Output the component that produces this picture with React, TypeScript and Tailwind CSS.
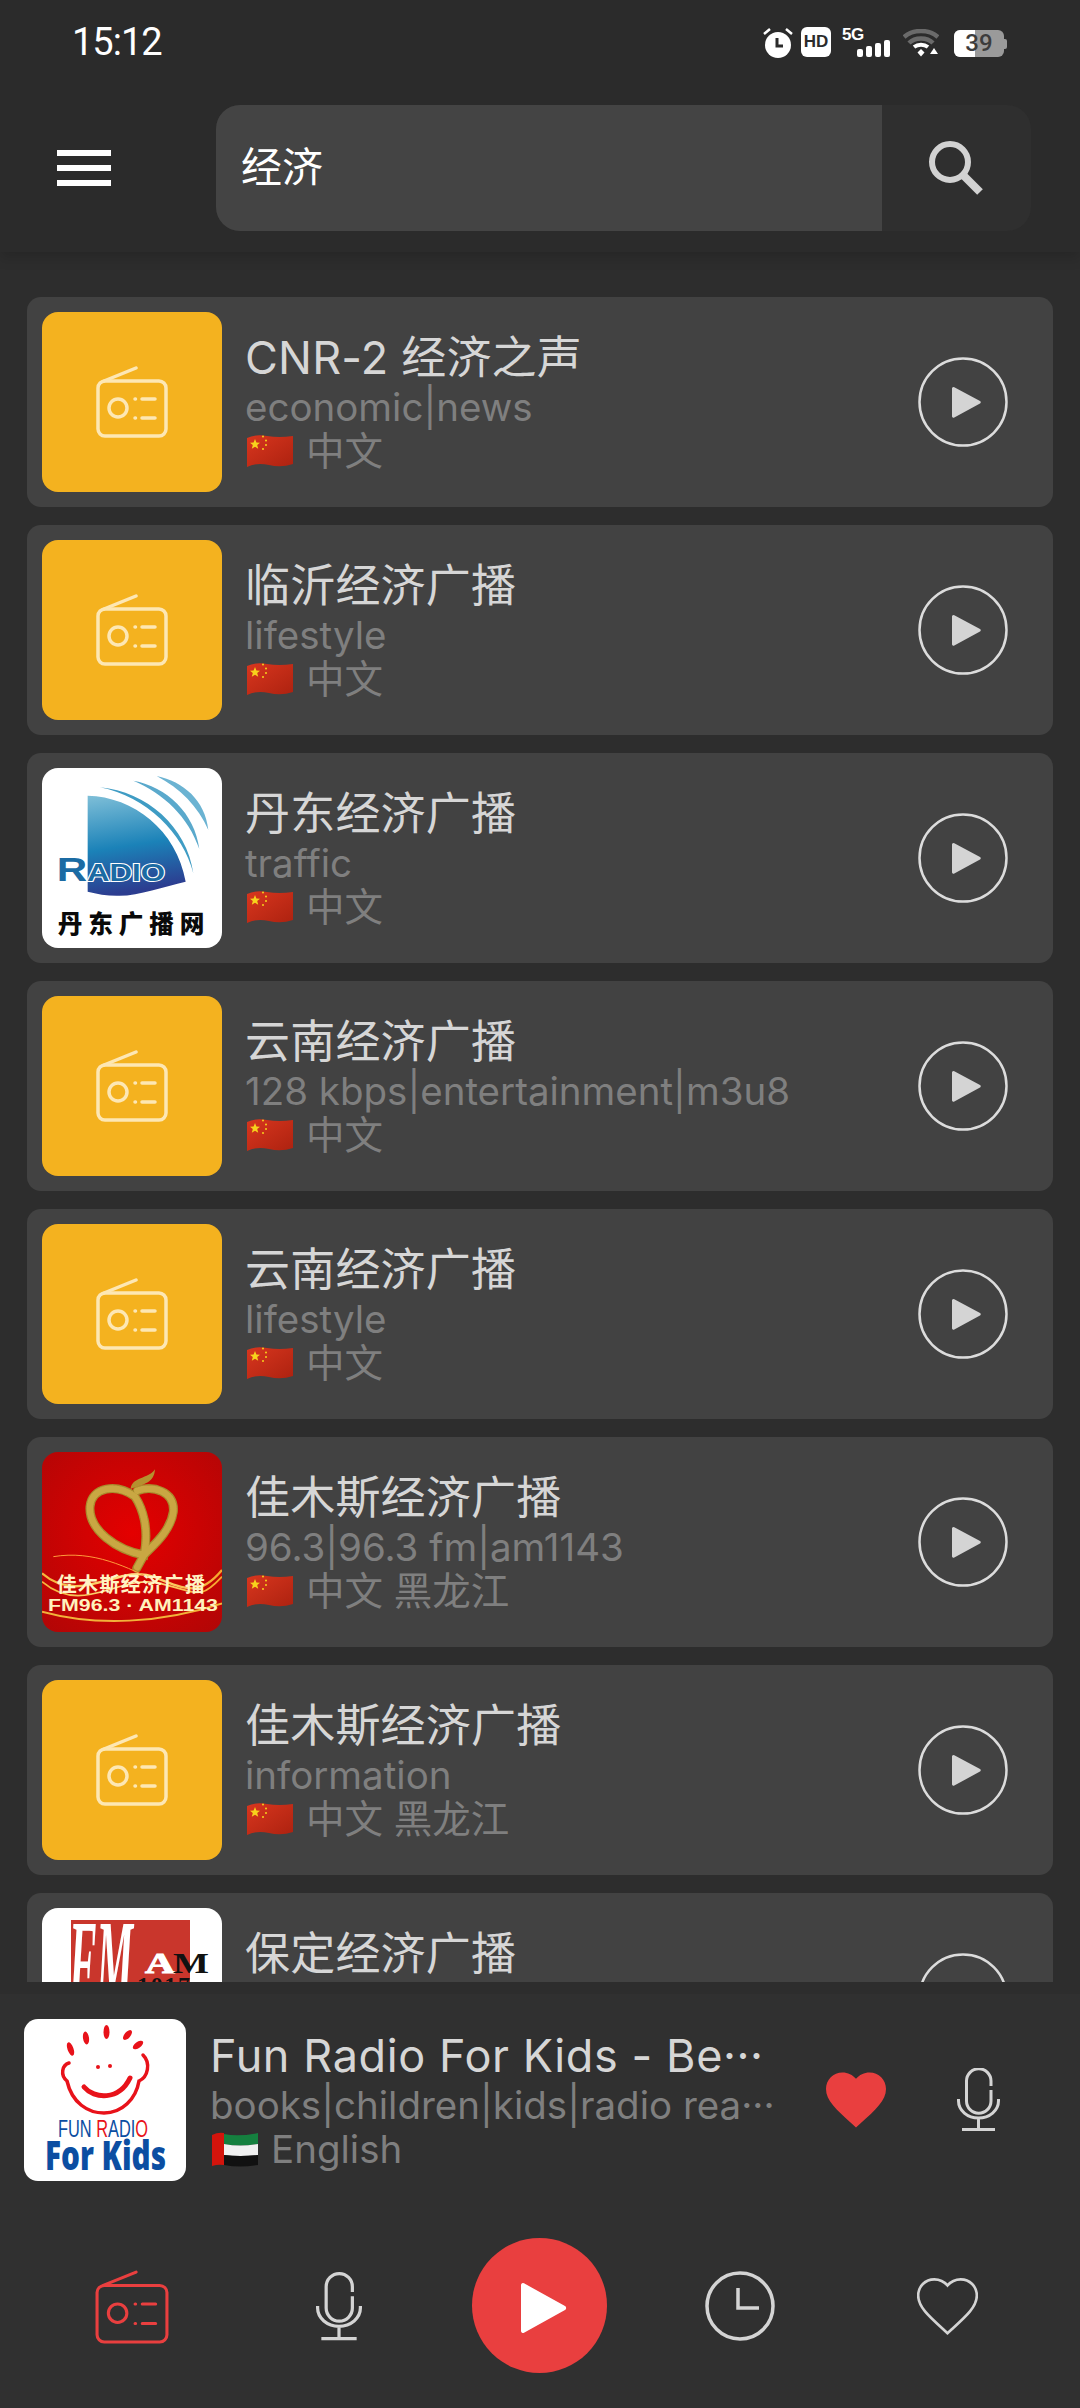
import React from 'react';

const font = { fontFamily: 'Inter, "Noto Sans CJK SC", sans-serif' };

const RadioIcon = ({ color, size = 72, stroke = 3.5 }: { color: string; size?: number; stroke?: number }) => (
  <svg width={size} height={size} viewBox="0 0 72 72" fill="none" stroke={color} strokeWidth={stroke} strokeLinecap="round" strokeLinejoin="round">
    <rect x="2" y="15" width="68" height="55" rx="7" />
    <path d="M8 15 40 2" />
    <circle cx="22" cy="42" r="9" />
    <path d="M39 33h.5M39 52h.5M46 33h13M46 52h13" />
  </svg>
);

const Mic = ({ color = '#d4d4d4', width = 43, height = 63 }: { color?: string; width?: number; height?: number }) => (
  <svg width={width} height={height} viewBox="0 0 43 63" fill="none" stroke={color} strokeWidth="3">
    <path d="M34 18v-5a12.2 12.2 0 0 0-24.5 0v20a12.2 12.2 0 0 0 24.5 0V22" />
    <path d="M1.5 31v2a20 17 0 0 0 40 0v-2M21.5 50v10M5 61.5h33" />
  </svg>
);

const heartPath =
  'M12 21.35l-1.45-1.32C5.4 15.36 2 12.28 2 8.5 2 5.42 4.42 3 7.5 3c1.74 0 3.41.81 4.5 2.09C13.09 3.81 14.76 3 16.5 3 19.58 3 22 5.42 22 8.5c0 3.78-3.4 6.86-8.55 11.54L12 21.35z';

const ChinaFlag = () => (
  <svg width="46" height="36" viewBox="0 0 46 36" className="shrink-0">
    <defs>
      <linearGradient id="cn" x1="0" y1="0" x2="1" y2="1">
        <stop offset="0" stopColor="#d8361e" />
        <stop offset="1" stopColor="#ad2210" />
      </linearGradient>
    </defs>
    <path d="M0 5Q8 1 20 3T46 3V31Q34 35 22 32T0 34Z" fill="url(#cn)" />
    <path d="M8 6l1.4 3.6 3.6.2-2.8 2.3 1 3.6L8 13.700 4.800 15.700l1-3.600L3 9.800l3.600-.2z" fill="#f7d21c" />
    <g fill="#f7d21c">
      <circle cx="16" cy="3.500" r="1" />
      <circle cx="19" cy="7.500" r="1" />
      <circle cx="19" cy="12" r="1" />
      <circle cx="16" cy="16" r="1" />
    </g>
  </svg>
);

const UaeFlag = () => (
  <svg width="46" height="36" viewBox="0 0 46 36" className="shrink-0">
    <path d="M12 3Q26 6 46 2V13Q28 16 12 13Z" fill="#15803f" />
    <path d="M12 13Q28 16 46 13V24Q28 26 12 24Z" fill="#f1f1f1" />
    <path d="M12 24Q28 26 46 24V34Q28 37 12 34Z" fill="#111" />
    <path d="M0 4Q6 1 12 2V34Q6 33 0 35Z" fill="#d3140c" />
  </svg>
);

const DandongLogo = () => (
  <svg width="180" height="180" viewBox="66 54 540 540" className="bg-white">
    <defs>
      <linearGradient id="dd" x1="0" y1="0" x2="0.15" y2="1">
        <stop offset="0" stopColor="#7fbfd8" />
        <stop offset="0.55" stopColor="#1b82b8" />
        <stop offset="1" stopColor="#2c3d90" />
      </linearGradient>
    </defs>
    <path d="M203 137C340 140 470 240 497 395C430 410 350 440 290 437C260 437 230 432 203 425Z" fill="url(#dd)" />
    <path d="M240 112C380 125 500 230 520 370C490 250 380 140 240 112Z" fill="#3f9cc4" />
    <path d="M340 92C440 110 525 190 538 297C505 200 430 130 340 92Z" fill="#5aa9cc" />
    <path d="M410 78C490 95 555 150 565 240C535 170 480 115 410 78Z" fill="#6bb3d2" />
    <text x="110" y="393" textLength="325" lengthAdjust="spacingAndGlyphs" fontFamily="Liberation Sans" fontWeight="700" fontSize="100" fill="#1b6ba3" stroke="#fff" strokeWidth="6" paintOrder="stroke">
      R<tspan fontSize="74">ADIO</tspan>
    </text>
    <text x="113" y="550" textLength="440" fontFamily="Noto Sans CJK SC" fontWeight="900" fontSize="74" fill="#0a0a0a">丹东广播网</text>
  </svg>
);

const JiamusiLogo = () => (
  <svg width="180" height="180" viewBox="66 36 540 540">
    <defs>
      <radialGradient id="jm" cx="0.5" cy="0.45" r="0.75">
        <stop offset="0" stopColor="#e40000" />
        <stop offset="1" stopColor="#b00606" />
      </radialGradient>
      <linearGradient id="jw" x1="0" y1="0" x2="1" y2="0">
        <stop offset="0" stopColor="#f5b53a" />
        <stop offset="0.5" stopColor="#ffe28a" />
        <stop offset="1" stopColor="#f5a52a" />
      </linearGradient>
    </defs>
    <rect x="66" y="36" width="540" height="540" fill="url(#jm)" />
    <g fill="none" strokeLinecap="round">
      <g stroke="#a98a2c" strokeWidth="27">
        <path d="M345 170C290 130 215 140 210 200C205 270 290 330 372 345C388 265 368 205 345 170Z" />
        <path d="M352 152C400 135 465 155 460 215C452 275 395 320 372 345L350 385" />
      </g>
      <g stroke="#c9a743" strokeWidth="20" strokeDasharray="1 6">
        <path d="M345 170C290 130 215 140 210 200C205 270 290 330 372 345C388 265 368 205 345 170Z" />
        <path d="M352 152C400 135 465 155 460 215C452 275 395 320 372 345L350 385" />
      </g>
    </g>
    <path d="M332 147C335 110 385 118 405 88C402 130 372 132 332 147Z" fill="#b5902f" />
    <g fill="none">
      <path d="M66 400C180 500 300 370 400 410S540 470 606 390" stroke="url(#jw)" strokeWidth="7" />
      <path d="M66 425C190 530 300 400 420 430S540 480 606 410" stroke="url(#jw)" strokeWidth="5" />
      <path d="M100 350C220 330 320 380 420 430" stroke="#ff9a3a" strokeWidth="3" />
      <path d="M66 515C230 560 420 550 606 490" stroke="#f2b23a" strokeWidth="6" />
    </g>
    <text x="110" y="456" textLength="445" fontFamily="Noto Sans CJK SC" fontWeight="700" fontSize="60" fill="#fff3c4">佳木斯经济广播</text>
    <text x="84" y="514" textLength="510" lengthAdjust="spacingAndGlyphs" fontFamily="Liberation Sans" fontWeight="700" fontSize="50" fill="#fff2bd">FM96.3 · AM1143</text>
  </svg>
);

const FmLogo = () => (
  <svg width="180" height="180" viewBox="0 0 180 180" className="bg-white">
    <rect x="29" y="12" width="119" height="150" fill="#c9362c" />
    <text x="27" y="95" fontFamily="Liberation Serif" fontWeight="700" fontStyle="italic" fontSize="120" fill="#fff" textLength="64" lengthAdjust="spacingAndGlyphs">FM</text>
    <text x="103" y="65" fontFamily="Liberation Serif" fontWeight="700" fontSize="30" fill="#fff" stroke="#fff" strokeWidth="1" textLength="30" lengthAdjust="spacingAndGlyphs">A</text>
    <text x="131" y="65" fontFamily="Liberation Serif" fontWeight="700" fontSize="30" fill="#111" textLength="36" lengthAdjust="spacingAndGlyphs">M</text>
    <text x="95" y="85" fontFamily="Liberation Serif" fontWeight="700" fontSize="24" fill="#111" textLength="53">1017</text>
  </svg>
);

const FunRadioLogo = () => (
  <svg width="162" height="162" viewBox="0 0 162 162" className="bg-white">
    <g fill="#e8121a">
      <ellipse cx="46.500" cy="30" rx="3" ry="7" transform="rotate(-20 46.500 30)" />
      <ellipse cx="62" cy="19" rx="3" ry="6.500" transform="rotate(-8 62 19)" />
      <ellipse cx="82.500" cy="13" rx="3" ry="7" />
      <ellipse cx="103.500" cy="16" rx="3" ry="6" transform="rotate(40 103.500 16)" />
      <ellipse cx="114" cy="26" rx="3" ry="6" transform="rotate(55 114 26)" />
      <circle cx="74" cy="48" r="2" />
      <circle cx="86" cy="47" r="2" />
    </g>
    <g fill="none" stroke="#e8121a" strokeLinecap="round">
      <path d="M45 44C38 46 36 56 43 62C48 84 64 94 80 94C98 94 112 80 115 62C124 58 127 44 119 36" strokeWidth="3.500" />
      <path d="M60 68C70 80 95 82 106 59" strokeWidth="5" />
    </g>
    <text x="34" y="118" textLength="90" lengthAdjust="spacingAndGlyphs" fontFamily="Liberation Sans" fontSize="24" fontWeight="400" fill="#0b4ea2">
      F<tspan fill="#0b4ea2">U</tspan>N <tspan fill="#e8121a">R</tspan>ADI<tspan fill="#e8121a">O</tspan>
    </text>
    <text x="21" y="151" textLength="121" lengthAdjust="spacingAndGlyphs" fontFamily="Open Sans" fontSize="40" fontWeight="800" fill="#0b4ea2">For Kids</text>
  </svg>
);

const Placeholder = () => (
  <div className="w-full h-full bg-[#f4b21f] flex items-center justify-center">
    <RadioIcon color="#fde7b4" />
  </div>
);

const stations = [
  { title: 'CNR-2 经济之声', tags: 'economic|news', lang: '中文' },
  { title: '临沂经济广播', tags: 'lifestyle', lang: '中文' },
  { title: '丹东经济广播', tags: 'traffic', lang: '中文', logo: <DandongLogo /> },
  { title: '云南经济广播', tags: '128 kbps|entertainment|m3u8', lang: '中文' },
  { title: '云南经济广播', tags: 'lifestyle', lang: '中文' },
  { title: '佳木斯经济广播', tags: '96.3|96.3 fm|am1143', lang: '中文 黑龙江', logo: <JiamusiLogo /> },
  { title: '佳木斯经济广播', tags: 'information', lang: '中文 黑龙江' },
  { title: '保定经济广播', tags: 'news', lang: '中文', logo: <FmLogo /> },
];

const StatusBar = () => (
  <div className="h-[105px] flex pl-[72px] pr-[73px] pt-[27px] items-start text-white">
    <span className="text-[38px] leading-[30px] tracking-[-1px] font-['Roboto']">15:12</span>
    <div className="ml-auto flex items-start">
      {/* alarm */}
      <svg width="30" height="32" viewBox="0 0 30 32">
        <circle cx="15" cy="18" r="13" fill="#fff" />
        <path d="M14 11v8h6" fill="none" stroke="#2b2b2b" strokeWidth="3" />
        <path d="M1 7l6-5M29 7l-6-5" stroke="#fff" strokeWidth="2.500" />
      </svg>
      <div className="ml-[8px] w-[30px] h-[30px] rounded-[6px] bg-white text-[#2b2b2b] text-[17px] font-black leading-[30px] text-center font-['Liberation_Sans']">HD</div>
      <div className="ml-[11px] w-[48px] h-[30px] relative">
        <span className="absolute left-0 -top-[1px] text-[17px] leading-[17px] font-bold font-['Liberation_Sans'] tracking-[-0.5px]">5G</span>
        <div className="absolute right-0 bottom-0 flex items-end gap-[3px]">
          <div className="w-[6px] h-[8px] rounded-[2px] bg-white" />
          <div className="w-[6px] h-[11px] rounded-[2px] bg-white" />
          <div className="w-[6px] h-[14px] rounded-[2px] bg-white" />
          <div className="w-[6px] h-[17px] rounded-[2px] bg-white" />
        </div>
      </div>
      {/* wifi */}
      <svg className="ml-[13px] mt-[2px]" width="36" height="28" viewBox="0 0 36 28" fill="none">
        <path d="M1 8C10 0 26 0 35 8" stroke="#6a6a6a" strokeWidth="4.500" />
        <path d="M6 14C12 8 24 8 30 14" stroke="#6a6a6a" strokeWidth="4.500" />
        <path d="M11 18C15 15 21 15 25 18" stroke="#fff" strokeWidth="4" />
        <path d="M14.500 23.500L18 20l3.500 3.500L18 27.500Z" fill="#fff" />
        <path d="M27 25l4-6 4 6Z" fill="#fff" />
      </svg>
      {/* battery */}
      <div className="ml-[15px] mt-[3px] flex items-center">
        <div className="relative w-[50px] h-[27px] rounded-[6px] bg-[#9a9a9a] overflow-hidden">
          <div className="w-[21px] h-full bg-white" />
          <span className="absolute inset-0 text-center text-[24px] leading-[27px] text-[#3c3c3c] font-['Roboto'] font-medium">39</span>
        </div>
        <div className="w-[3px] h-[10px] rounded-r-[2px] bg-[#9a9a9a]" />
      </div>
    </div>
  </div>
);

const StationCard = ({ title, tags, lang, logo }: { title: string; tags: string; lang: string; logo?: React.ReactNode }) => (
  <div className="h-[210px] shrink-0 rounded-[14px] bg-[#424242] flex items-center pl-[15px] pr-[45px]">
    <div className="w-[180px] h-[180px] shrink-0 rounded-[16px] overflow-hidden">{logo ?? <Placeholder />}</div>
    <div className="flex-1 min-w-0 ml-[23px] flex flex-col">
      <div className="text-[45px] leading-[54px] tracking-[0.2px] text-[#d6d6d6] whitespace-nowrap">{title}</div>
      <div className="text-[38.5px] leading-[44px] text-[#7f7f7f] whitespace-nowrap">{tags}</div>
      <div className="pl-[2px] flex items-center gap-[13px] text-[38.5px] leading-[44px] text-[#7f7f7f]">
        <ChinaFlag />
        <span>{lang}</span>
      </div>
    </div>
    <svg width="90" height="90" viewBox="0 0 90 90" className="shrink-0">
      <circle cx="45" cy="45" r="43.500" fill="none" stroke="#dcdcdc" strokeWidth="2.500" />
      <path d="M34 31.500a1.500 1.500 0 0 1 2.300-1.300L62 44a1.500 1.500 0 0 1 0 2.600L36.300 60.500a1.500 1.500 0 0 1-2.300-1.300Z" fill="#d4d4d4" />
    </svg>
  </div>
);

export default function App() {
  return (
    <div className="w-[1080px] h-[2408px] flex flex-col bg-[#2d2d2d] overflow-hidden" style={font}>
      {/* Header */}
      <header className="relative z-10 h-[252px] shrink-0 bg-[#2b2b2b] shadow-[0_6px_12px_rgba(0,0,0,0.15)]">
        <StatusBar />
        <div className="h-[126px] flex items-center">
          <div className="w-[216px] shrink-0 pl-[57px] flex flex-col gap-[9px]">
            <div className="w-[54px] h-[6px] bg-white" />
            <div className="w-[54px] h-[6px] bg-white" />
            <div className="w-[54px] h-[6px] bg-white" />
          </div>
          <div className="w-[815px] h-full rounded-[24px] bg-[#2f2f2f] overflow-hidden flex">
            <div className="w-[666px] h-full bg-[#444444] pl-[25px] flex items-center text-[41px] text-white">经济</div>
            <div className="flex-1 flex items-center justify-center pr-[2px]">
              <svg width="56" height="56" viewBox="0 0 56 56" fill="none" stroke="#d2d2d2">
                <circle cx="22" cy="22" r="18" strokeWidth="6" />
                <path d="M34 34L52 52" strokeWidth="8" />
              </svg>
            </div>
          </div>
        </div>
      </header>

      {/* Station list */}
      <main className="h-[1730px] shrink-0 overflow-hidden px-[27px] pt-[45px] flex flex-col gap-[18px]">
        {stations.map((s, i) => (
          <StationCard key={i} {...s} />
        ))}
      </main>

      <div className="h-[12px] shrink-0" />

      {/* Now playing */}
      <section className="flex-1 flex flex-col bg-[#303030]">
        <div className="h-[211px] shrink-0 flex items-center pl-[24px]">
          <div className="w-[162px] h-[162px] shrink-0 rounded-[14px] overflow-hidden"><FunRadioLogo /></div>
          <div className="w-[570px] ml-[24px] flex flex-col">
            <div className="text-[45px] leading-[54px] tracking-[0.6px] text-[#d6d6d6] whitespace-nowrap">Fun Radio For Kids - Be···</div>
            <div className="text-[38.5px] leading-[44px] text-[#7f7f7f] whitespace-nowrap">books|children|kids|radio rea···</div>
            <div className="pl-[2px] flex items-center gap-[13px] text-[38.5px] leading-[44px] text-[#7f7f7f]">
              <UaeFlag />
              <span>English</span>
            </div>
          </div>
          <svg className="ml-[46px]" width="60" height="56" viewBox="2 3 20 18.350">
            <path d={heartPath} fill="#e93f3f" />
          </svg>
          <div className="ml-[71px]"><Mic /></div>
        </div>
        <nav className="flex-1 flex items-start pl-[95px] pt-[33px]">
          <div className="mt-[32px]"><RadioIcon color="#e93f3f" size={74} stroke={3} /></div>
          <div className="ml-[147px] mt-[34px]"><Mic width={46} height={69} /></div>
          <div className="ml-[110px] w-[135px] h-[135px] rounded-full bg-[#e93f3f] flex items-center justify-center pl-[8px] pt-[4px]">
            <svg width="46" height="52" viewBox="0 0 46 52">
              <path d="M0 3a2 2 0 0 1 3-1.700L44 24a2.300 2.300 0 0 1 0 4L3 50.700A2 2 0 0 1 0 49Z" fill="#fff" />
            </svg>
          </div>
          <svg className="ml-[98px] mt-[33px]" width="70" height="70" viewBox="0 0 70 70" fill="none" stroke="#d4d4d4">
            <circle cx="35" cy="35" r="33" strokeWidth="3.500" />
            <path d="M33 17v20h21" strokeWidth="3.500" />
          </svg>
          <svg className="ml-[142px] mt-[40px]" width="61" height="57" viewBox="1.600 2.600 20.800 19.300" fill="none">
            <path d={heartPath} stroke="#d4d4d4" strokeWidth="0.900" />
          </svg>
        </nav>
      </section>
    </div>
  );
}
